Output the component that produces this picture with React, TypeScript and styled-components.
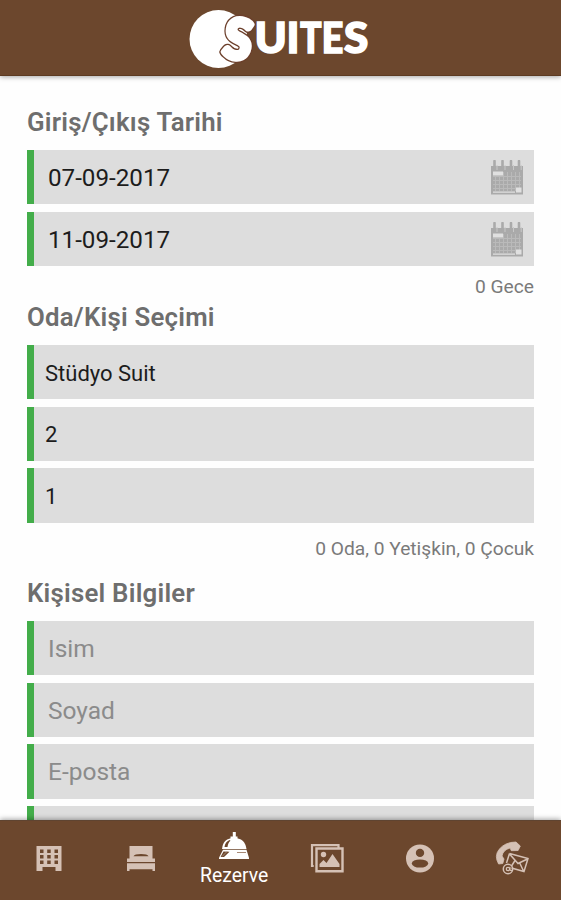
import React from "react";
import styled, { createGlobalStyle } from "styled-components";

const GlobalStyle = createGlobalStyle`
  * { box-sizing: border-box; }
  body { margin: 0; background: #fefefe; font-family: Roboto, sans-serif; }
`;

const Screen = styled.div`
  display: flex;
  flex-direction: column;
  height: 900px;
  overflow: hidden;
  background: #fefefe;
`;

const Header = styled.header`
  flex: 0 0 76px;
  display: flex;
  justify-content: center;
  background: #6c472d;
  border-bottom: 1px solid #5d3b22;
  box-shadow: 0 1px 5px rgba(0, 0, 0, 0.35);
  z-index: 1;
`;

const Main = styled.main`
  flex: 1;
  min-height: 0;
  overflow: hidden;
  padding: 31px 27px 0;
`;

const Section = styled.section<{ $height: number }>`
  height: ${(p) => p.$height}px;
`;

const Heading = styled.h2`
  margin: 0 0 13px;
  height: 30px;
  font-size: 25.8px;
  letter-spacing: 0.23px;
  line-height: 30px;
  font-weight: 600;
  color: #6e6e6e;
  white-space: nowrap;
`;

const Fields = styled.div`
  display: flex;
  flex-direction: column;
  gap: 7.2px;
`;

type FieldKind = "date" | "select" | "input";

const fieldFontSize: Record<FieldKind, number> = { date: 24.2, select: 22, input: 24.5 };

const Field = styled.div<{ $kind: FieldKind }>`
  flex: 0 0 54.4px;
  display: flex;
  align-items: center;
  justify-content: space-between;
  border-left: 7px solid #43ad4a;
  background: #dddddd;
  padding: ${(p) => (p.$kind === "select" ? 3 : 2)}px 10px 0 ${(p) => (p.$kind === "select" ? 11 : 14)}px;
  font-size: ${(p) => fieldFontSize[p.$kind]}px;
  line-height: 30px;
  color: ${(p) => (p.$kind === "input" ? "#8b8b8b" : "#1c1c1c")};
`;

const Note = styled.div<{ $top: number }>`
  margin-top: ${(p) => p.$top}px;
  height: 24px;
  line-height: 24px;
  font-size: 19.2px;
  text-align: right;
  color: #7a7a7a;
`;

const Nav = styled.nav`
  flex: 0 0 80px;
  display: grid;
  grid-template-columns: repeat(6, 92.8px);
  justify-content: center;
  padding: 0 1px;
  background: #6c472d;
  border-top: 1px solid #5f4431;
  box-shadow: 0 -1px 5px rgba(0, 0, 0, 0.35);
  z-index: 1;
`;

const Tab = styled.div<{ $active?: boolean }>`
  display: flex;
  flex-direction: column;
  align-items: center;
  padding-top: ${(p) => (p.$active ? 8 : 19)}px;
  color: ${(p) => (p.$active ? "#ffffff" : "#d5c1b5")};
`;

const TabLabel = styled.span`
  margin-top: -1px;
  font-size: 19.4px;
  line-height: 24px;
`;

const LogoSvg = styled.svg`
  display: block;
  overflow: visible;
  font-family: Lato, sans-serif;
  font-weight: 900;
  fill: #fff;
`;

const logoLetters = [
  { char: "U", x: 254.2, width: 32 },
  { char: "I", x: 286.3, width: 12.5 },
  { char: "T", x: 299.8, width: 21.2 },
  { char: "E", x: 321.3, width: 21.5 },
  { char: "S", x: 343.6, width: 24.2 },
];

const Logo = () => (
  <LogoSvg width="191" height="75" viewBox="184.500 0 191 75" role="img" aria-label="Suites">
    <circle cx="218" cy="39" r="29" />
    <g transform="translate(220.700 56.500) rotate(9)" fontSize="55.500" strokeLinejoin="round">
      <text textLength="28" lengthAdjust="spacingAndGlyphs" stroke="#6c3f2b" strokeWidth="7.800">
        S
      </text>
      <text textLength="28" lengthAdjust="spacingAndGlyphs" stroke="#fff" strokeWidth="5" aria-hidden="true">
        S
      </text>
    </g>
    <g fontSize="41.500" stroke="#fff" strokeWidth="1.700">
      {logoLetters.map((l) => (
        <text key={l.char} x={l.x} y="53.300" textLength={l.width} lengthAdjust="spacingAndGlyphs">
          {l.char}
        </text>
      ))}
    </g>
  </LogoSvg>
);

const CalendarIcon = () => (
  <svg width="34" height="36" viewBox="0 0 34 36">
    <path d="M1 6h32v28.500H1z" fill="#aaa" />
    <path
      d="M4.500 1v8M12.500 1v8M21 1v8M29 1v8"
      stroke="#aaa"
      strokeWidth="2.600"
      strokeLinecap="round"
    />
    <path d="M7 5v5M15 5v5M23.500 5v5M31.200 5v5" stroke="#c8c8c8" strokeWidth="1" />
    <path
      d="M3 16.500h28M3 20.500h28M3 24.500h28M3 28.500h28M13.500 12v19M17.500 12v19M21.500 12v19M25.500 12v19M29.500 12v19M5.500 17v14M9.500 17v14"
      stroke="#bababa"
      strokeWidth="1"
    />
    <path d="M3 11.500h10v4H3zM26 27.500h5.500v5H26zM3 31.500h22v1.200H3z" fill="#e0e0e0" />
  </svg>
);

const BuildingIcon = () => (
  <svg width="26" height="38" viewBox="0 0 26 38">
    <path d="M.5 6h25v25h-6v-4h-13v4h-6z" fill="currentColor" />
    <path
      d="M4 9.500h3.500V13H4zM11.200 9.500h3.500V13h-3.500zM18.500 9.500H22V13h-3.500zM4 15h3.500v3.500H4zM11.200 15h3.500v3.500h-3.500zM18.500 15H22v3.500h-3.500zM4 20.500h3.500V24H4zM11.200 20.500h3.500V24h-3.500zM18.500 20.500H22V24h-3.500z"
      fill="#6c472d"
    />
  </svg>
);

const BedIcon = () => (
  <svg width="30" height="38" viewBox="0 0 30 38" fill="currentColor">
    <path d="M3.500 6h23v12.500H29V22H1v-3.500h2.500z" />
    <path d="M1 23.200h28v7.800h-2.500v-1.800h-23V31H1z" />
    <path d="M7.500 16.200q1-2.200 7.500-2.200t7.500 2.200z" fill="#6c472d" />
  </svg>
);

const BellIcon = () => (
  <svg width="32" height="36" viewBox="0 0 32 36" fill="currentColor">
    <path d="M14.800 3h3v5.500h-3zM12.500 7.500h7v2.500h-7z" />
    <path d="M4 20Q5 9 16 9t12.500 11z" />
    <path d="M5 20.800h23.500l2.500 8V30H1v-1.200z" />
    <path d="M6.500 18Q7 13 11.500 11l1 .8Q10 13.500 9.500 18zM2.500 28l3-5.500 6 .3L6 28z" fill="#6c472d" />
    <path d="M4 27.500l5-5M19 23.500h9" fill="none" stroke="#a88a76" strokeWidth="1" />
  </svg>
);

const GalleryIcon = () => (
  <svg width="34" height="38" viewBox="0 0 34 38">
    <path d="M3.700 26H2V5.200h26.500V8" fill="none" stroke="currentColor" strokeWidth="2.200" />
    <path d="M6.500 8.500h26v22.700h-26z" fill="none" stroke="currentColor" strokeWidth="2.400" />
    <circle cx="13.500" cy="14.500" r="2.700" fill="currentColor" />
    <path d="M9.500 27v-3l4-4 3 3 6-9 7 10v3z" fill="currentColor" />
  </svg>
);

const AccountIcon = () => (
  <svg width="30" height="38" viewBox="0 0 30 38">
    <circle cx="15" cy="18.500" r="14" fill="currentColor" />
    <circle cx="15" cy="12.900" r="4.200" fill="#6c472d" />
    <ellipse cx="15" cy="23.500" rx="8.200" ry="4.100" fill="#6c472d" />
  </svg>
);

const ContactIcon = () => (
  <svg width="36" height="38" viewBox="0 0 36 38" fill="none" stroke="currentColor">
    <path
      d="M8.800 23.500l-4.200.5Q0 16 5 9.500 11 2 22 2l4.300 4-2.200 4.500-6.800.2-1.200-2.700Q9 10 8 16l2 3z"
      fill="currentColor"
      strokeWidth="0.800"
      strokeLinejoin="round"
    />
    <path
      d="M15.500 13.500l18.500 5-4 13-12.500-3.500M15.500 13.500l-3 9.500M15.500 14l8.500 9.500L33.500 19M29.500 31l-4-8.500M17.500 26l3.500-5.500"
      strokeWidth="1.500"
    />
    <circle cx="14" cy="29" r="4.700" strokeWidth="1.500" />
    <circle cx="14" cy="29" r="1.700" strokeWidth="1.300" />
    <path d="M16 26.700v3q1 1.800 2.600 0" strokeWidth="1.100" />
  </svg>
);

export default function App() {
  return (
    <>
      <GlobalStyle />
      <Screen>
        <Header>
          <Logo />
        </Header>
        <Main>
          <Section $height={195}>
            <Heading>Giriş/Çıkış Tarihi</Heading>
            <Fields>
              <Field $kind="date">07-09-2017<CalendarIcon /></Field>
              <Field $kind="date">11-09-2017<CalendarIcon /></Field>
            </Fields>
            <Note $top={9.2}>0 Gece</Note>
          </Section>
          <Section $height={276}>
            <Heading>Oda/Kişi Seçimi</Heading>
            <Fields>
              <Field $kind="select">Stüdyo Suit</Field>
              <Field $kind="select">2</Field>
              <Field $kind="select">1</Field>
            </Fields>
            <Note $top={14.8}>0 Oda, 0 Yetişkin, 0 Çocuk</Note>
          </Section>
          <Section $height={300}>
            <Heading>Kişisel Bilgiler</Heading>
            <Fields>
              <Field $kind="input">Isim</Field>
              <Field $kind="input">Soyad</Field>
              <Field $kind="input">E-posta</Field>
              <Field $kind="input" />
            </Fields>
          </Section>
        </Main>
        <Nav>
          <Tab><BuildingIcon /></Tab>
          <Tab><BedIcon /></Tab>
          <Tab $active>
            <BellIcon />
            <TabLabel>Rezerve</TabLabel>
          </Tab>
          <Tab><GalleryIcon /></Tab>
          <Tab><AccountIcon /></Tab>
          <Tab><ContactIcon /></Tab>
        </Nav>
      </Screen>
    </>
  );
}
